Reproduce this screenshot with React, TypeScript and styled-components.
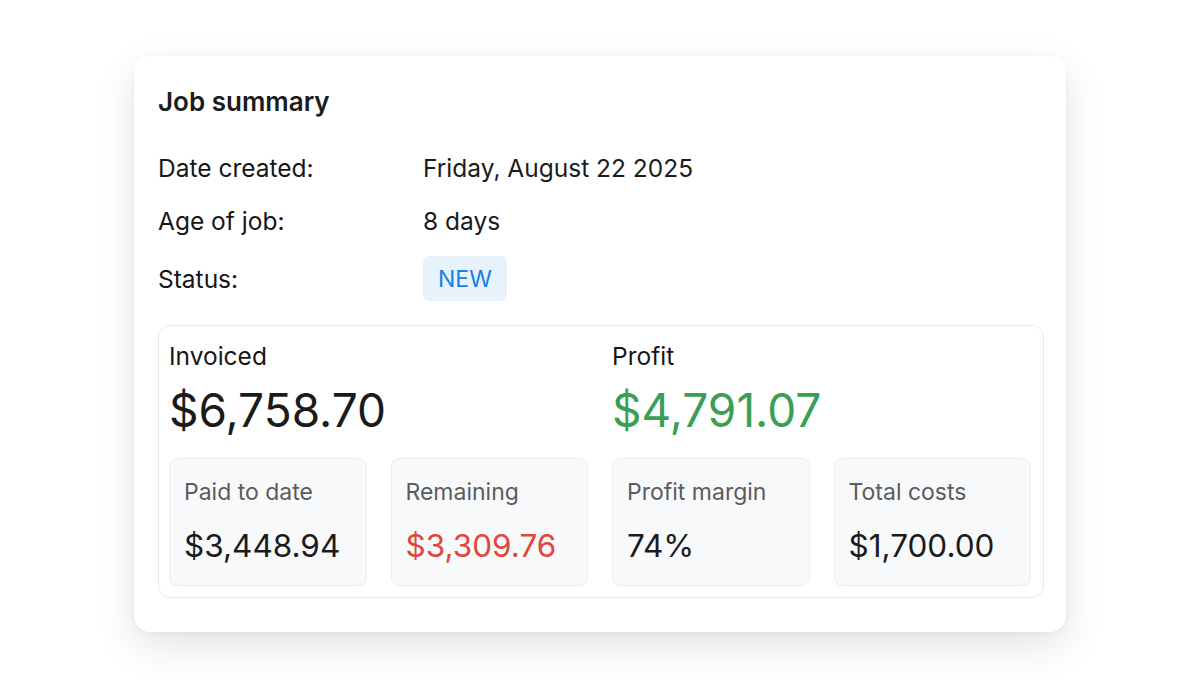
import React from "react";
import styled, { createGlobalStyle } from "styled-components";

const GlobalStyle = createGlobalStyle`
  html, body {
    margin: 0;
    padding: 0;
    background: #ffffff;
  }
  body {
    font-family: Inter, "Noto Sans", sans-serif;
    color: #1b1b1b;
  }
`;

const Page = styled.div`
  display: flex;
  justify-content: center;
  padding-top: 56px;
  height: 688px;
  box-sizing: border-box;
`;

const Card = styled.div`
  width: 932px;
  box-sizing: border-box;
  background: #fff;
  border-radius: 16px;
  padding: 30px 22px 34px 24px;
  box-shadow: 0 14px 40px rgba(0, 0, 0, 0.11), 0 2px 6px rgba(0, 0, 0, 0.04);
  height: fit-content;
`;

const Title = styled.h2`
  margin: 0 0 32px;
  font-size: 26px;
  line-height: 32px;
  font-weight: 600;
  color: #1b1b1b;
`;

const Details = styled.div`
  display: grid;
  grid-template-columns: 265px 1fr;
  row-gap: 17px;
  align-items: center;
`;

const Label = styled.div`
  font-size: 24.5px;
  line-height: 36px;
  font-weight: 400;
  color: #161616;
`;

const Value = styled.div`
  font-size: 24.5px;
  line-height: 36px;
  color: #1b1b1b;
`;

const Badge = styled.span`
  display: inline-flex;
  align-items: center;
  height: 45px;
  padding: 0 15px;
  border-radius: 6px;
  background: #e7f2fd;
  color: #1a7fe3;
  font-size: 23px;
  font-weight: 400;
`;

const Totals = styled.div`
  margin-top: 24px;
  border: 1px solid #e9eaec;
  border-radius: 12px;
  padding: 16px 12px 11px 10px;
  display: grid;
  grid-template-columns: repeat(4, 1fr);
  column-gap: 24px;
`;

const Headline = styled.div`
  grid-column: span 2;
  margin-bottom: 20px;
`;

const HeadLabel = styled.div`
  font-size: 24.5px;
  line-height: 28px;
  font-weight: 400;
  color: #161616;
`;

const Amount = styled.div<{ $color?: string }>`
  margin-top: 12px;
  font-size: 46px;
  line-height: 56px;
  font-weight: 400;
  color: ${(p) => p.$color || "#1b1b1b"};
`;

const Stat = styled.div`
  background: #f8f9fb;
  border: 1px solid #eceef1;
  border-radius: 8px;
  padding: 21px 14px 21px;
`;

const StatLabel = styled.div`
  font-size: 23px;
  line-height: 24px;
  color: #5c5c5c;
`;

const StatValue = styled.div<{ $color?: string }>`
  margin-top: 24px;
  font-size: 31.5px;
  line-height: 36px;
  color: ${(p) => p.$color || "#1b1b1b"};
`;

const stats = [
  { label: "Paid to date", value: "$3,448.94" },
  { label: "Remaining", value: "$3,309.76", color: "#e2453a" },
  { label: "Profit margin", value: "74%" },
  { label: "Total costs", value: "$1,700.00" },
];

export default function App() {
  return (
    <>
      <GlobalStyle />
      <Page>
        <Card>
          <Title>Job summary</Title>
          <Details>
            <Label>Date created:</Label>
            <Value>Friday, August 22 2025</Value>
            <Label>Age of job:</Label>
            <Value>8 days</Value>
            <Label>Status:</Label>
            <div>
              <Badge>NEW</Badge>
            </div>
          </Details>
          <Totals>
            <Headline>
              <HeadLabel>Invoiced</HeadLabel>
              <Amount>$6,758.70</Amount>
            </Headline>
            <Headline>
              <HeadLabel>Profit</HeadLabel>
              <Amount $color="#3a9e55">$4,791.07</Amount>
            </Headline>
            {stats.map((s) => (
              <Stat key={s.label}>
                <StatLabel>{s.label}</StatLabel>
                <StatValue $color={s.color}>{s.value}</StatValue>
              </Stat>
            ))}
          </Totals>
        </Card>
      </Page>
    </>
  );
}
